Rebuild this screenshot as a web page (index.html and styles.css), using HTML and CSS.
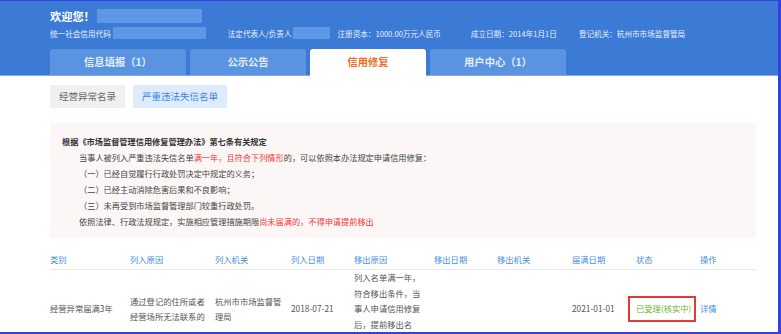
FILE: index.html
```html
<!DOCTYPE html>
<html lang="zh-CN">

<head>
    <meta charset="UTF-8">
    <meta name="viewport" content="width=device-width, initial-scale=1.0">
    <title>信用修复</title>
    <link rel="stylesheet" href="styles.css">
</head>

<body>
    <div class="page">
        <div class="header">
            <div class="welcome">欢迎您！<span class="mask mask-name"></span></div>
            <div class="info">
                <span class="info-item">统一社会信用代码<span class="mask mask-code"></span></span>
                <span class="info-item tight">法定代表人/负责人<span class="mask mask-person"></span></span>
                <span class="info-item loose">注册资本：1000.00万元人民币</span>
                <span class="info-item">成立日期：2014年1月1日</span>
                <span class="info-item">登记机关：杭州市市场监督管局</span>
            </div>
            <ul class="tabs">
                <li class="tab wide">信息填报（1）</li>
                <li class="tab">公示公告</li>
                <li class="tab active">信用修复</li>
                <li class="tab wide">用户中心（1）</li>
            </ul>
        </div>

        <div class="main">
            <div class="sub-tabs">
                <span class="sub-tab">经营异常名录</span>
                <span class="sub-tab current">严重违法失信名单</span>
            </div>

            <div class="notice">
                <p class="notice-title">根据《市场监督管理信用修复管理办法》第七条有关规定</p>
                <p>当事人被列入严重违法失信名单<span class="red">满一年，且符合下列情形</span>的，可以依照本办法规定申请信用修复：</p>
                <p>（一）已经自觉履行行政处罚决定中规定的义务；</p>
                <p>（二）已经主动消除危害后果和不良影响；</p>
                <p>（三）未再受到市场监督管理部门较重行政处罚。</p>
                <p>依照法律、行政法规规定，实施相应管理措施期限<span class="red">尚未届满的，不得申请提前移出</span></p>
            </div>

            <table class="list">
                <colgroup>
                    <col style="width: 80px">
                    <col style="width: 85px">
                    <col style="width: 76px">
                    <col style="width: 63px">
                    <col style="width: 80px">
                    <col style="width: 63px">
                    <col style="width: 75px">
                    <col style="width: 64px">
                    <col style="width: 64px">
                    <col style="width: 56px">
                </colgroup>
                <thead>
                    <tr>
                        <th>类别</th>
                        <th>列入原因</th>
                        <th>列入机关</th>
                        <th>列入日期</th>
                        <th>移出原因</th>
                        <th>移出日期</th>
                        <th>移出机关</th>
                        <th>届满日期</th>
                        <th>状态</th>
                        <th>操作</th>
                    </tr>
                </thead>
                <tbody>
                    <tr>
                        <td>经营异常届满3年</td>
                        <td>通过登记的住所或者经营场所无法联系的</td>
                        <td>杭州市市场监督管理局</td>
                        <td>2018-07-21</td>
                        <td>列入名单满一年，符合移出条件，当事人申请信用修复后，提前移出名单，停止公示</td>
                        <td></td>
                        <td></td>
                        <td>2021-01-01</td>
                        <td><span class="status">已受理(核实中)</span></td>
                        <td><a class="detail" href="#">详情</a></td>
                    </tr>
                </tbody>
            </table>
        </div>
    </div>
</body>

</html>
```

FILE: styles.css
```css
body {
    margin: 0;
    font-family: 'Noto Sans CJK SC', 'Liberation Sans', sans-serif;
    background: #fff;
}

.page {
    width: 781px;
    height: 334px;
    box-sizing: border-box;
    border-top: 1px solid #3440e6;
    border-right: 3px solid #3440e6;
    border-bottom: 2px solid #3440e6;
    overflow: hidden;
}

/* header */
.header {
    background-color: #3b7bd5;
    padding: 7px 0 0 50px;
    border-bottom: 1px solid #86a9ec;
    color: #fff;
}

.welcome {
    display: flex;
    align-items: center;
    height: 15px;
    font-size: 11.2px;
    font-weight: bold;
}

.mask {
    display: inline-block;
    background-color: #5d97e6;
}

.mask-name {
    width: 105px;
    height: 14px;
    margin-left: 2px;
}

.info {
    display: flex;
    align-items: center;
    height: 12px;
    margin-top: 4px;
    font-size: 7.6px;
    color: #e9f0fb;
}

.info-item {
    display: flex;
    align-items: center;
    margin-right: 22px;
}

.info-item.tight {
    margin-right: 7px;
}

.info-item.loose {
    margin-right: 30px;
}

.mask-code {
    width: 93px;
    height: 12px;
    margin-left: 2px;
}

.mask-person {
    width: 37px;
    height: 12px;
    margin-left: 2px;
}

.tabs {
    display: flex;
    align-items: flex-start;
    gap: 4px;
    height: 27px;
    margin: 10px 0 -1px;
    padding: 0;
    list-style: none;
}

.tab {
    width: 116px;
    height: 26px;
    line-height: 26px;
    text-align: center;
    background-color: #5a94e1;
    color: #e3edfa;
    font-size: 10.3px;
    font-weight: bold;
    border-radius: 3px 3px 0 0;
}

.tab.wide {
    width: 136px;
}

.tab.active {
    height: 27px;
    background-color: #fff;
    color: #f26b1d;
}

/* content */
.main {
    width: 706px;
    padding: 9px 0 0 50px;
}

.sub-tabs {
    display: flex;
    gap: 8px;
}

.sub-tab {
    height: 23px;
    line-height: 23px;
    padding: 0 9px;
    font-size: 9.5px;
    background-color: #f0f0f0;
    color: #666;
}

.sub-tab.current {
    background-color: #ddebfc;
    color: #3a86e0;
}

.notice {
    margin-top: 15px;
    padding: 10px 12px 9px;
    background-color: #fcf6f6;
    font-size: 8.2px;
    line-height: 16px;
    color: #444;
}

.notice p {
    margin: 0;
    padding-left: 17px;
}

.notice p.notice-title {
    padding-left: 0;
    font-weight: bold;
    color: #333;
}

.red {
    color: #ef3b36;
}

.list {
    width: 706px;
    margin-top: 10px;
    border-collapse: collapse;
    table-layout: fixed;
    font-size: 8.3px;
}

.list th {
    height: 21px;
    padding: 0 8px 0 0;
    text-align: left;
    font-weight: normal;
    color: #4a8fdc;
    border-bottom: 1px solid #e8e8e8;
}

.list td {
    padding: 0 8px 0 0;
    line-height: 15.7px;
    color: #555;
    vertical-align: middle;
}

.status {
    display: inline-block;
    margin-left: -8px;
    padding: 3px 3px 3px 6px;
    border: 2px solid #e53935;
    color: #6ab62e;
    white-space: nowrap;
}

.detail {
    color: #3a8ee6;
    text-decoration: none;
}
```
